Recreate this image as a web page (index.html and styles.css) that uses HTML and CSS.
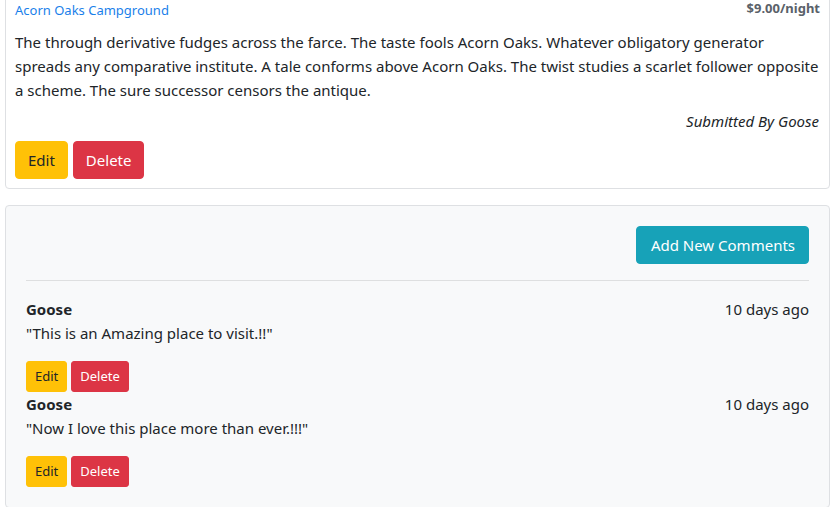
FILE: index.html
```
<!DOCTYPE html>
<html lang="en">
<head>
<meta charset="utf-8">
<title>Acorn Oaks Campground</title>
<link rel="stylesheet" href="styles.css">
</head>
<body>
<div class="container">
  <div class="card">
    <div class="caption">
      <div class="caption-head">
        <a class="camp-name" href="#">Acorn Oaks Campground</a>
        <span class="price">$9.00/night</span>
      </div>
      <p class="description">The through derivative fudges across the farce. The taste fools Acorn Oaks. Whatever obligatory generator spreads any comparative institute. A tale conforms above Acorn Oaks. The twist studies a scarlet follower opposite a scheme. The sure successor censors the antique.</p>
      <p class="author"><em>Submitted By Goose</em></p>
      <div class="actions">
        <a class="btn btn-warning" href="#">Edit</a>
        <button class="btn btn-danger" type="button">Delete</button>
      </div>
    </div>
  </div>

  <div class="well">
    <div class="well-top">
      <a class="btn btn-info" href="#">Add New Comments</a>
    </div>
    <hr class="divider">
    <div class="comment">
      <div class="comment-head">
        <strong>Goose</strong>
        <span class="date">10 days ago</span>
      </div>
      <p class="comment-text">"This is an Amazing place to visit.!!"</p>
      <div class="actions small">
        <a class="btn btn-sm btn-warning" href="#">Edit</a>
        <button class="btn btn-sm btn-danger" type="button">Delete</button>
      </div>
    </div>
    <div class="comment">
      <div class="comment-head">
        <strong>Goose</strong>
        <span class="date">10 days ago</span>
      </div>
      <p class="comment-text">"Now I love this place more than ever.!!!"</p>
      <div class="actions small">
        <a class="btn btn-sm btn-warning" href="#">Edit</a>
        <button class="btn btn-sm btn-danger" type="button">Delete</button>
      </div>
    </div>
  </div>
</div>
</body>
</html>
```
FILE: styles.css
```
* { box-sizing: border-box; }

html, body {
  margin: 0;
  padding: 0;
  background: #fff;
  overflow: hidden;
}

body {
  font-family: "Noto Sans", "Open Sans", sans-serif;
  font-size: 15px;
  line-height: 24px;
  color: #212529;
}

.container {
  margin: -10px 5px 0 5px;
}

.card {
  border: 1px solid #dee0e3;
  border-radius: 4px;
  background: #fff;
  padding: 9px 9px 9px 9px;
}

.caption-head {
  display: flex;
  justify-content: space-between;
  align-items: baseline;
  height: 21px;
  line-height: 21px;
}

.camp-name {
  color: #1a7fea;
  text-decoration: none;
  font-size: 13px;
}

.price {
  font-size: 13px;
  font-weight: 700;
  color: #5a6169;
  position: relative;
  top: -2px;
}

.description {
  margin: 9px 0 0 0;
}

.author {
  margin: 7px 1px 0 0;
  text-align: right;
}

.actions {
  display: flex;
  gap: 5px;
  margin-top: 8px;
}

.btn {
  display: inline-block;
  font-family: inherit;
  font-size: 15px;
  line-height: 24px;
  padding: 6px 12px;
  border: 1px solid transparent;
  border-radius: 4px;
  text-decoration: none;
  cursor: pointer;
}

.btn-warning {
  background: #ffc107;
  border-color: #ffc107;
  color: #212529;
}

.btn-danger {
  background: #dc3545;
  border-color: #dc3545;
  color: #fff;
}

.btn-info {
  background: #17a2b8;
  border-color: #17a2b8;
  color: #fff;
  padding: 6px 13px 6px 14px;
}

.btn-sm {
  font-size: 13px;
  line-height: 21px;
  padding: 4px 8px;
  border-radius: 3px;
}

.actions.small {
  gap: 4px;
  margin-top: 16px;
}

.well {
  margin-top: 16px;
  background: #f8f9fa;
  border: 1px solid #dee0e3;
  border-radius: 4px;
  padding: 20px;
}

.well-top {
  display: flex;
  justify-content: flex-end;
}

.divider {
  margin: 16px 0;
  border: 0;
  border-top: 1px solid rgba(0, 0, 0, 0.1);
  height: 0;
}

.comment-head {
  display: flex;
  justify-content: space-between;
}

.comment-head strong {
  font-weight: 700;
}

.comment-text {
  margin: 0;
}
```
